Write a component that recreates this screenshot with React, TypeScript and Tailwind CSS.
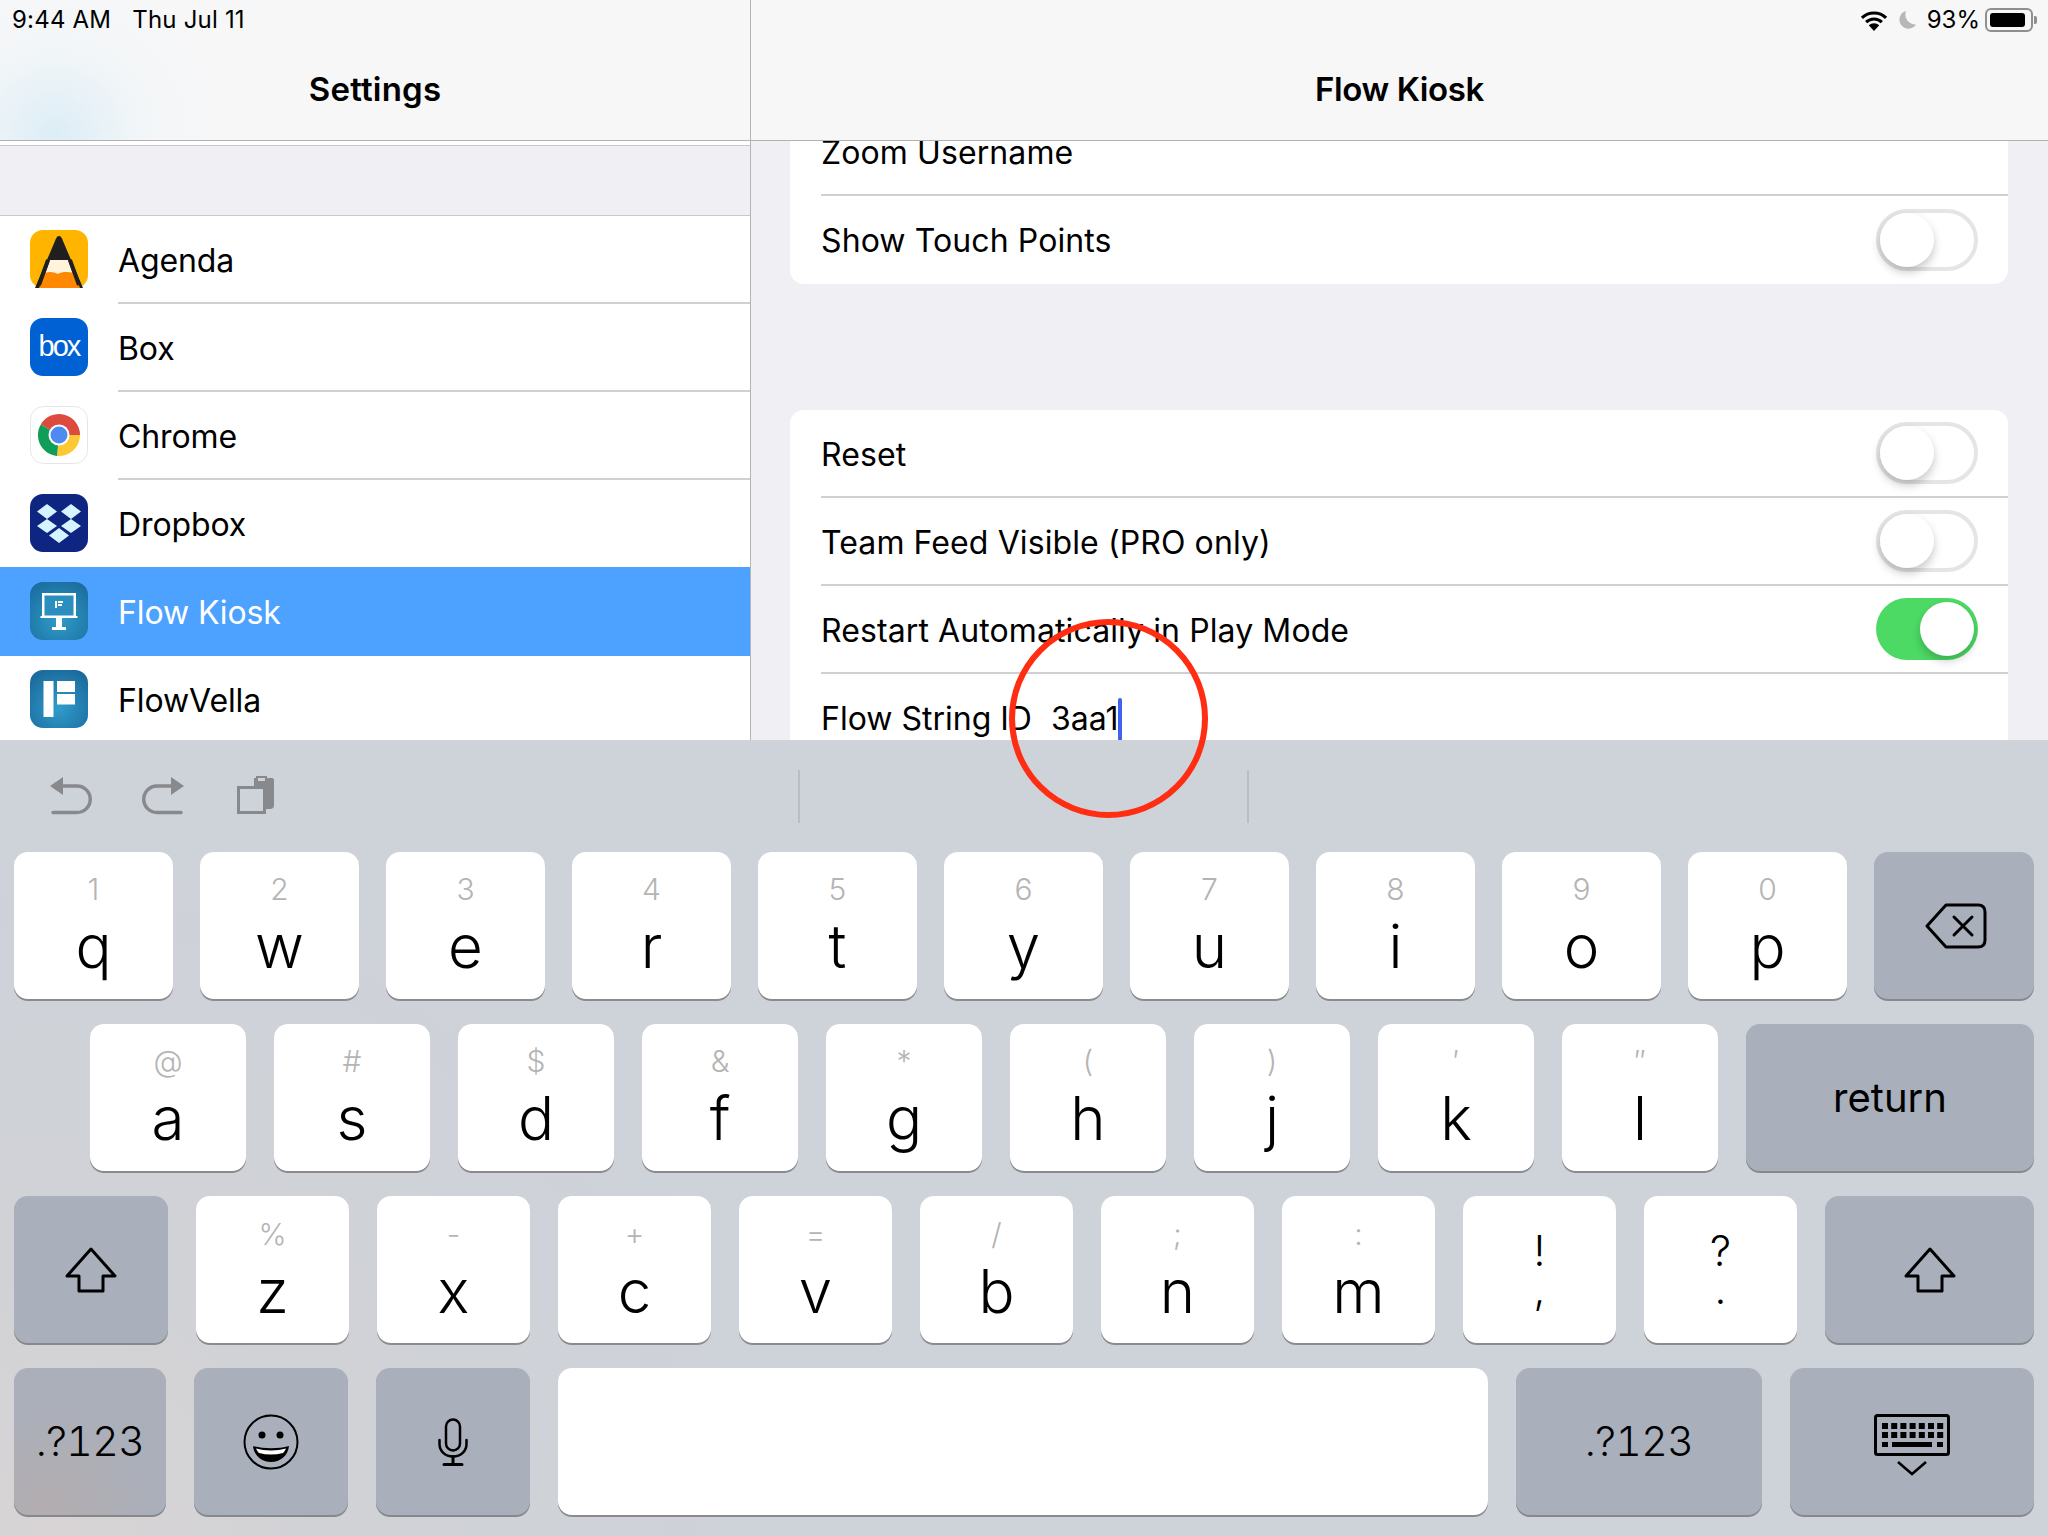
import React from 'react'

const row1 = [['q', '1'], ['w', '2'], ['e', '3'], ['r', '4'], ['t', '5'], ['y', '6'], ['u', '7'], ['i', '8'], ['o', '9'], ['p', '0']]
const row2 = [['a', '@'], ['s', '#'], ['d', '$'], ['f', '&'], ['g', '*'], ['h', '('], ['j', ')'], ['k', '′'], ['l', '″']]
const row3 = [['z', '%'], ['x', '-'], ['c', '+'], ['v', '='], ['b', '/'], ['n', ';'], ['m', ':']]

export default function App() {
  return (
    <div className="relative w-[2048px] h-[1536px] overflow-hidden bg-[#ced2d9] font-['Inter',sans-serif] text-black">
      <div className="flex h-[740px] overflow-hidden">
        <SettingsList />
        <DetailPane />
      </div>
      <Keyboard />
      <div className="absolute left-[1009px] top-[619px] w-[199px] h-[199px] rounded-full border-[6px] border-[#ff2d12]" />
    </div>
  )
}

function SettingsList() {
  return (
    <div className="w-[751px] shrink-0 border-r border-[#b4b4b8] bg-white">
      <div className="h-[141px] border-b border-[#b2b2b2] bg-[radial-gradient(circle_at_55px_135px,#dcedf6_0,#f3f6f8_90px,#f7f7f8_170px)]">
        <div className="flex h-[40px] items-center gap-[21px] pl-[12px] text-[24px] tracking-[0.2px]">
          <span>9:44 AM</span>
          <span>Thu Jul 11</span>
        </div>
        <div className="flex h-[100px] items-center justify-center text-[33px] font-semibold tracking-[0.2px]">Settings</div>
      </div>
      <div className="h-[71px] mt-[4px] border-t border-b border-[#c8c8cc] bg-[#efeff4]" />
      <AppRow name="Agenda" icon={<AgendaIcon />} />
      <AppRow name="Box" icon={<BoxIcon />} />
      <AppRow name="Chrome" icon={<ChromeIcon />} />
      <AppRow name="Dropbox" icon={<DropboxIcon />} plain />
      <AppRow name="Flow Kiosk" icon={<KioskIcon />} selected />
      <AppRow name="FlowVella" icon={<VellaIcon />} plain />
    </div>
  )
}

function AppRow({ name, icon, selected, plain }: { name: string; icon: React.ReactNode; selected?: boolean; plain?: boolean }) {
  return (
    <div className={selected ? '-mt-[1px] flex h-[89px] bg-[#4da2ff] pl-[30px] pt-[1px] text-white' : 'flex h-[88px] pl-[30px]'}>
      <div className="mt-[14px] h-[58px] w-[58px] shrink-0">{icon}</div>
      <div className={plain || selected ? 'ml-[30px] flex flex-1 items-center pt-[1px] text-[32px] tracking-[-0.1px]' : 'ml-[30px] flex flex-1 items-center border-b-2 border-[#d0d0d4] pt-[3px] text-[32px] tracking-[-0.1px]'}>
        {name}
      </div>
    </div>
  )
}

function DetailPane() {
  return (
    <div className="flex-1 bg-[#efeff4]">
      <div className="relative z-10 h-[141px] border-b border-[#b2b2b2] bg-[#f7f7f8]">
        <div className="flex h-[40px] items-center justify-end pr-[11px] text-[24px]">
          <WifiIcon />
          <MoonIcon />
          <span className="ml-[11px]">93%</span>
          <Battery />
        </div>
        <div className="flex h-[100px] items-center justify-center text-[33px] font-semibold tracking-[-0.4px]">Flow Kiosk</div>
      </div>
      <div className="ml-[39px] mr-[40px] -mt-[33px] rounded-[14px] bg-white">
        <SettingRow label="Zoom Username" />
        <SettingRow label="Show Touch Points" toggle="off" last />
      </div>
      <div className="ml-[39px] mr-[40px] mt-[126px] rounded-[14px] bg-white">
        <SettingRow label="Reset" toggle="off" />
        <SettingRow label="Team Feed Visible (PRO only)" toggle="off" />
        <SettingRow label="Restart Automatically in Play Mode" toggle="on" />
        <div className="flex h-[88px] items-center pl-[31px] pt-[2px] text-[32px]">
          <span>Flow String ID</span>
          <span className="ml-[19px]">3aa1</span>
          <span className="mt-[2px] h-[44px] w-[4px] rounded-[2px] bg-[#3f63ec]" />
        </div>
      </div>
    </div>
  )
}

function SettingRow({ label, toggle, last }: { label: string; toggle?: 'on' | 'off'; last?: boolean }) {
  return (
    <div className="pl-[31px]">
      <div className={last ? 'flex h-[88px] items-center justify-between pr-[30px]' : 'flex h-[88px] items-center justify-between border-b-2 border-[#d0d0d4] pr-[30px]'}>
        <span className={last ? 'pt-[1px] text-[32px] tracking-[0.1px]' : 'pt-[3px] text-[32px] tracking-[0.1px]'}>{label}</span>
        {toggle === 'on' && (
          <div className="flex h-[62px] w-[102px] items-center justify-end rounded-full bg-[#4cd964] p-[4px]">
            <div className="h-[54px] w-[54px] rounded-full bg-white shadow-[0_5px_8px_rgba(0,0,0,0.2)]" />
          </div>
        )}
        {toggle === 'off' && (
          <div className="flex h-[62px] w-[102px] items-center rounded-full border-[4px] border-[#e5e5e5] bg-white">
            <div className="h-[54px] w-[54px] rounded-full bg-white shadow-[0_5px_10px_rgba(0,0,0,0.22)]" />
          </div>
        )}
      </div>
    </div>
  )
}

function Keyboard() {
  return (
    <div className="h-[796px] bg-[radial-gradient(circle_at_60px_790px,#d8d4d5_0,#d0d2d6_300px,#ced2d9_700px)]">
      <div className="flex h-[112px] items-center pl-[50px]">
        <UndoIcon />
        <div className="ml-[50px] -scale-x-100"><UndoIcon /></div>
        <ClipboardIcon />
        <div className="ml-[524px] h-[53px] w-[2px] bg-[#b9bdc4]" />
        <div className="ml-[447px] h-[53px] w-[2px] bg-[#b9bdc4]" />
      </div>
      <div className="flex flex-col gap-[25px] px-[14px]">
        <div className="flex gap-[27px]">
          {row1.map(([l, s]) => (
            <LetterKey key={l} letter={l} sub={s} className="w-[159px]" />
          ))}
          <DarkKey className="flex-1 pl-[3px]"><BackspaceIcon /></DarkKey>
        </div>
        <div className="flex gap-[28px] pl-[76px]">
          {row2.map(([l, s]) => (
            <LetterKey key={l} letter={l} sub={s} className="w-[156px]" />
          ))}
          <DarkKey className="flex-1 text-[40px]">return</DarkKey>
        </div>
        <div className="flex gap-[28px]">
          <DarkKey className="w-[154px]"><ShiftIcon /></DarkKey>
          {row3.map(([l, s]) => (
            <LetterKey key={l} letter={l} sub={s} low className="w-[153px]" />
          ))}
          <PunctKey top="!" bottom="," />
          <PunctKey top="?" bottom="." />
          <DarkKey className="flex-1"><ShiftIcon /></DarkKey>
        </div>
        <div className="flex gap-[28px]">
          <DarkKey className="w-[152px] bg-[radial-gradient(circle_at_35px_140px,#b3adb0_0,#aaafba_110px)] text-[41px] font-light tabular-nums tracking-[-0.5px]">.?123</DarkKey>
          <DarkKey className="w-[154px]"><SmileIcon /></DarkKey>
          <DarkKey className="w-[154px]"><MicIcon /></DarkKey>
          <div className="h-[147px] w-[930px] rounded-[14px] bg-white shadow-[0_2px_0_#8b8b8f]" />
          <DarkKey className="w-[246px] text-[41px] font-light tabular-nums tracking-[-0.5px]">.?123</DarkKey>
          <DarkKey className="flex-1 pt-[7px]"><HideKeyboardIcon /></DarkKey>
        </div>
      </div>
    </div>
  )
}

function LetterKey({ letter, sub, className, low }: { letter: string; sub: string; className: string; low?: boolean }) {
  return (
    <div className={`flex h-[147px] flex-col items-center rounded-[14px] bg-white shadow-[0_2px_0_#8b8b8f] ${low ? 'pt-[21px]' : 'pt-[20px]'} ${className}`}>
      <span className="h-[34px] text-[30px] font-light leading-[34px] text-[#b4b4b4]">{sub}</span>
      <span className={`${low ? 'mt-[10px]' : 'mt-[10px]'} h-[60px] text-[60px] font-light leading-[60px]`}>{letter}</span>
    </div>
  )
}

function PunctKey({ top, bottom }: { top: string; bottom: string }) {
  return (
    <div className="flex h-[147px] w-[153px] flex-col items-center rounded-[14px] bg-white pt-[36px] shadow-[0_2px_0_#8b8b8f]">
      <span className="h-[38px] text-[42px] font-light leading-[38px]">{top}</span>
      <span className="h-[38px] text-[42px] font-light leading-[38px]">{bottom}</span>
    </div>
  )
}

function DarkKey({ className, children }: { className: string; children: React.ReactNode }) {
  return (
    <div className={`flex h-[147px] items-center justify-center rounded-[14px] bg-[#a9afbb] shadow-[0_2px_0_#87888c] ${className}`}>
      {children}
    </div>
  )
}

function WifiIcon() {
  return (
    <svg width="28" height="21" viewBox="0 0 26 20" fill="none" stroke="#000" strokeWidth="3">
      <path d="M1.5 7.5A16.5 16.5 0 0 1 24.5 7.5" />
      <path d="M5.5 11.5A11 11 0 0 1 20.5 11.5" />
      <path d="M13 20L8 14.6A7.4 7.4 0 0 1 18 14.6Z" fill="#000" stroke="none" />
    </svg>
  )
}

function MoonIcon() {
  return (
    <svg className="ml-[10px]" width="18" height="18" viewBox="0 0 18 18" fill="#b7b7b7">
      <path d="M8 0A9 9 0 1 0 18 13.5 A10 10 0 0 1 8 0Z" />
    </svg>
  )
}

function Battery() {
  return (
    <div className="ml-[5px] flex items-center">
      <div className="h-[24px] w-[48px] rounded-[6px] border-2 border-[#8f8f8f] p-[3px]">
        <div className="h-full w-[93%] rounded-[3px] bg-black" />
      </div>
      <div className="ml-[1px] h-[8px] w-[3px] rounded-r-[2px] bg-[#8f8f8f]" />
    </div>
  )
}

function AgendaIcon() {
  return (
    <svg width="58" height="58" viewBox="0 0 58 58">
      <rect width="58" height="58" rx="13" fill="#ffb400" />
      <path d="M29 6C31 6 32 8 33 11L53 58H5L25 11C26 8 27 6 29 6Z" fill="#1f1f1f" />
      <path d="M20 30H38L47 55H11Z" fill="#fff3dc" />
      <path d="M15 43C20 41 24 42 28 44C33 41 39 42 44 43L50 58H9Z" fill="#ff8800" />
      <path d="M18 30L9 55M40 30L49 55" stroke="#1f1f1f" strokeWidth="4" />
    </svg>
  )
}

function BoxIcon() {
  return (
    <div className="flex h-[58px] w-[58px] items-center justify-center rounded-[13px] bg-[#0061d5] pb-[1px] font-['Liberation_Sans',sans-serif] text-[29px] tracking-[-2px] text-white">
      box
    </div>
  )
}

function ChromeIcon() {
  return (
    <svg width="58" height="58" viewBox="0 0 58 58">
      <rect x="0.5" y="0.5" width="57" height="57" rx="13" fill="#fff" stroke="#e6e6e6" />
      <path d="M29 29L10.8 18.5A21 21 0 0 1 50 29Z" fill="#dd4b3e" />
      <path d="M29 29H50A21 21 0 0 1 27 50Z" fill="#fcc934" />
      <path d="M29 29L27 50A21 21 0 0 1 10.8 18.5Z" fill="#0f9d58" />
      <circle cx="29" cy="29" r="10.5" fill="#fff" />
      <circle cx="29" cy="29" r="8.5" fill="#4d8bf0" />
    </svg>
  )
}

function DropboxIcon() {
  return (
    <svg width="58" height="58" viewBox="0 0 58 58">
      <rect width="58" height="58" rx="13" fill="#0e2582" />
      <g fill="#d6f4ff">
        <path d="M17 10L27 17.5L17 25L7 17.5Z" />
        <path d="M41 10L51 17.5L41 25L31 17.5Z" />
        <path d="M17 25L27 32L17 39L7 32Z" />
        <path d="M41 25L51 32L41 39L31 32Z" />
        <path d="M29 34L39 41.5L29 49L19 41.5Z" />
      </g>
    </svg>
  )
}

function KioskIcon() {
  return (
    <svg width="58" height="58" viewBox="0 0 58 58">
      <defs>
        <radialGradient id="kioskBg" cx="50%" cy="65%" r="70%">
          <stop offset="0" stopColor="#2f9ccb" />
          <stop offset="1" stopColor="#1b6f9f" />
        </radialGradient>
      </defs>
      <rect width="58" height="58" rx="13" fill="url(#kioskBg)" />
      <path d="M12 11H46V34H47.5V36H10.5V34H12Z" fill="#fff" />
      <rect x="14.5" y="13.5" width="29" height="20" fill="#2a8fbf" />
      <rect x="26" y="36" width="6" height="9" fill="#fff" />
      <rect x="22" y="45" width="14" height="3" fill="#fff" />
      <path d="M25 19H27V26H25ZM28 19H33V21H28ZM28 22H32V24H28Z" fill="#fff" />
    </svg>
  )
}

function VellaIcon() {
  return (
    <svg width="58" height="58" viewBox="0 0 58 58">
      <defs>
        <radialGradient id="vellaBg" cx="50%" cy="65%" r="70%">
          <stop offset="0" stopColor="#2f9ccb" />
          <stop offset="1" stopColor="#1b6a9c" />
        </radialGradient>
      </defs>
      <rect width="58" height="58" rx="13" fill="url(#vellaBg)" />
      <rect x="13.5" y="11" width="10" height="36" fill="#fff" />
      <rect x="27" y="11" width="18" height="11" fill="#fff" />
      <rect x="27" y="24" width="18" height="10.5" fill="#fff" />
    </svg>
  )
}

function UndoIcon() {
  return (
    <svg width="42" height="38" viewBox="0 0 42 38" fill="none" stroke="#88898d" strokeWidth="3.5" strokeLinecap="round">
      <path d="M0 9L13 0V18Z" fill="#88898d" stroke="none" />
      <path d="M12 9H27A13 13 0 0 1 27 35.5H3" />
    </svg>
  )
}

function ClipboardIcon() {
  return (
    <svg className="ml-[53px] -mt-[3px]" width="37" height="39" viewBox="0 0 37 39" fill="#88898d">
      <path d="M17 3H19V1H30V3H35C36 3 37 4 37 5V31C37 33 35 34 33 34H29V11H17Z" />
      <rect x="1.5" y="12.5" width="26" height="25" fill="none" stroke="#88898d" strokeWidth="3" />
      <rect x="21" y="3" width="7" height="3" fill="#ced2d9" />
    </svg>
  )
}

function BackspaceIcon() {
  return (
    <svg width="62" height="46" viewBox="0 0 62 46" fill="none" stroke="#000" strokeWidth="3" strokeLinecap="round" strokeLinejoin="round">
      <path d="M21 2H53C57 2 60 4 60 9V37C60 42 57 44 53 44H21L2 23Z" />
      <path d="M29 14L47 32M47 14L29 32" />
    </svg>
  )
}

function ShiftIcon() {
  return (
    <svg width="52" height="46" viewBox="0 0 52 46" fill="none" stroke="#000" strokeWidth="3" strokeLinejoin="round">
      <path d="M26 2L50 29H38V44H14V29H2Z" />
    </svg>
  )
}

function SmileIcon() {
  return (
    <svg width="56" height="56" viewBox="0 0 56 56">
      <circle cx="28" cy="28" r="26.5" fill="none" stroke="#000" strokeWidth="2" />
      <circle cx="19" cy="21" r="3.5" />
      <circle cx="37" cy="21" r="3.5" />
      <path d="M10 32C20 35 36 35 46 32C45 42 37 48 28 48C19 48 11 42 10 32Z" />
      <path d="M13 34.5C22 37 34 37 43 34.5C42 37 41 38 40 39C32 41 24 41 16 39C15 38 14 37 13 34.5Z" fill="#fff" />
    </svg>
  )
}

function MicIcon() {
  return (
    <svg width="30" height="48" viewBox="0 0 30 48" fill="none" stroke="#000" strokeWidth="2.5" strokeLinecap="round">
      <rect x="8" y="1.5" width="14" height="31" rx="7" />
      <path d="M1.5 22V26C1.5 33 7 38.5 15 38.5C23 38.5 28.5 33 28.5 26V22" />
      <path d="M15 38.5V46M6 46.5H24" strokeWidth="3" />
    </svg>
  )
}

function HideKeyboardIcon() {
  const dots = [0, 1, 2, 3, 4, 5, 6]
  return (
    <svg width="76" height="62" viewBox="0 0 76 62">
      <rect x="1.5" y="1.5" width="73" height="39" rx="2" fill="none" stroke="#000" strokeWidth="3" />
      {dots.map((i) => (
        <rect key={`a${i}`} x={8 + i * 9.2} y="9" width="6" height="6" />
      ))}
      {dots.map((i) => (
        <rect key={`b${i}`} x={8 + i * 9.2} y="18" width="6" height="6" />
      ))}
      <rect x="8" y="28" width="6" height="5" />
      <rect x="18" y="28" width="40" height="5" />
      <rect x="63" y="28" width="6" height="5" />
      <path d="M24 48L38 60L52 48" fill="none" stroke="#000" strokeWidth="2.5" />
    </svg>
  )
}
